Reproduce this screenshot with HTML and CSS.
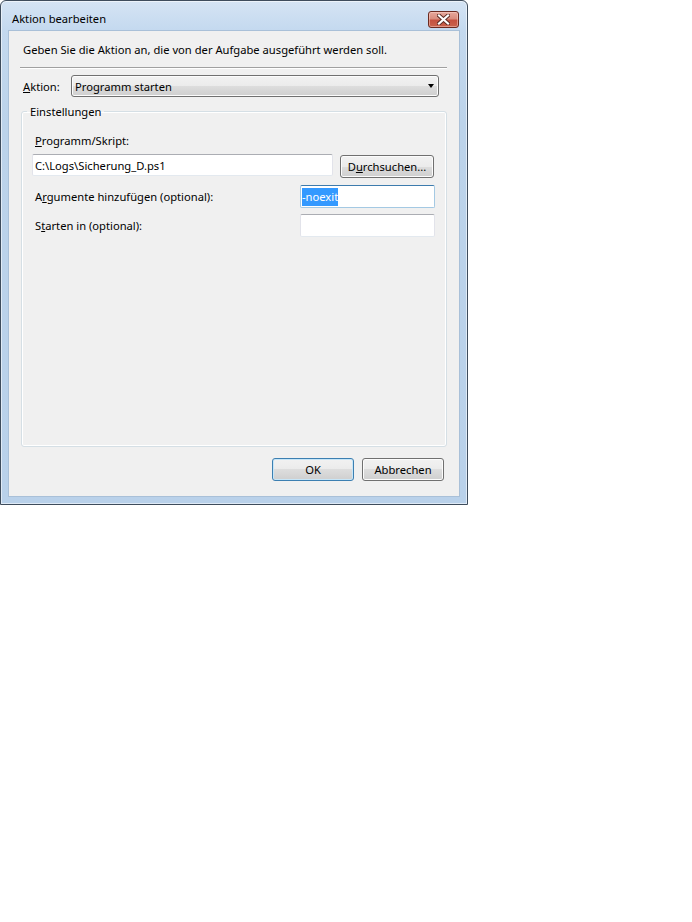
FILE: index.html
```html
<!DOCTYPE html>
<html lang="de">
<head>
<meta charset="utf-8">
<title>Aktion bearbeiten</title>
<link rel="stylesheet" href="styles.css">
</head>
<body>
<div class="window">
  <div class="titlebar">
    <span class="title">Aktion bearbeiten</span>
    <span class="close" aria-label="Schließen">
      <svg width="13" height="11" viewBox="0 0 13 11">
        <path d="M2 1.5 L11 9.5 M11 1.5 L2 9.5" stroke="#5a2a22" stroke-width="4" stroke-linecap="square" fill="none"/>
        <path d="M2 1.5 L11 9.5 M11 1.5 L2 9.5" stroke="#ffffff" stroke-width="2.2" stroke-linecap="square" fill="none"/>
      </svg>
    </span>
  </div>
  <div class="client">
    <p class="intro">Geben Sie die Aktion an, die von der Aufgabe ausgeführt werden soll.</p>
    <div class="sep"></div>
    <div class="action-row">
      <span class="action-label"><u>A</u>ktion:</span>
      <div class="combo"><span class="combo-text">Programm starten</span><span class="arrow"></span></div>
    </div>
    <fieldset class="group">
      <legend class="group-title">Einstellungen</legend>
      <div class="field-label"><u>P</u>rogramm/Skript:</div>
      <div class="program-row">
        <div class="textbox wide">C:\Logs\Sicherung_D.ps1</div>
        <div class="btn browse">D<u>u</u>rchsuchen...</div>
      </div>
      <div class="opt-row first">
        <span class="opt-label">A<u>r</u>gumente hinzufügen (optional):</span>
        <div class="textbox small focused"><span class="sel">-noexit</span></div>
      </div>
      <div class="opt-row">
        <span class="opt-label">S<u>t</u>arten in (optional):</span>
        <div class="textbox small"></div>
      </div>
    </fieldset>
    <div class="buttons">
      <div class="btn default">OK</div>
      <div class="btn">Abbrechen</div>
    </div>
  </div>
</div>
</body>
</html>
```

FILE: styles.css
```css
* { box-sizing: border-box; }

body {
  margin: 0;
  background: #ffffff;
  font-family: "Noto Sans", "Liberation Sans", sans-serif;
  font-size: 11.2px;
  color: #000000;
}

u { text-decoration: underline; text-underline-offset: 1px; }

.window {
  width: 468px;
  height: 505px;
  border: 1px solid #3e4c5c;
  border-radius: 6px 6px 0 0;
  background: linear-gradient(to bottom, #d5e4f4 0px, #c4d9ef 29px, #bcd3ea 120px, #b9d1ea 100%);
  box-shadow: inset 0 0 0 1px rgba(255, 255, 255, 0.55);
  padding: 0 7px 7px 7px;
  display: flex;
  flex-direction: column;
}

.titlebar {
  height: 29px;
  display: flex;
  align-items: flex-start;
  justify-content: space-between;
}

.title {
  margin: 10px 0 0 4px;
  line-height: 15px;
  color: #000;
}

.close {
  margin: 10px 1px 0 0;
  width: 31px;
  height: 17px;
  border: 1px solid #6b2a20;
  border-radius: 3px;
  background: linear-gradient(to bottom, #e7a89c 0%, #d98d7e 45%, #c5513f 55%, #c9634d 100%);
  box-shadow: inset 0 0 0 1px rgba(255, 220, 210, 0.45);
  display: flex;
  align-items: center;
  justify-content: center;
}

.client {
  flex: 1;
  background: #f0f0f0;
  border: 1px solid #a9c0d8;
  display: flex;
  flex-direction: column;
}

.intro {
  margin: 11px 0 0 14px;
  line-height: 15px;
}

.sep {
  margin: 10px 12px 0 11px;
  height: 2px;
  border-top: 1px solid #a0a0a0;
  border-bottom: 1px solid #ffffff;
}

.action-row {
  margin: 6px 0 0 14px;
  display: flex;
  align-items: center;
}

.action-label {
  width: 48px;
  line-height: 15px;
}

.combo {
  width: 368px;
  height: 22px;
  border: 1px solid #707070;
  border-radius: 3px;
  background: linear-gradient(to bottom, #f2f2f2 0%, #ebebeb 50%, #dddddd 50%, #cfcfcf 100%);
  box-shadow: inset 0 0 0 1px #fcfcfc;
  display: flex;
  align-items: center;
  padding: 0 4px 0 3px;
}

.combo-text { flex: 1; line-height: 15px; }

.arrow {
  width: 0;
  height: 0;
  border-left: 3.5px solid transparent;
  border-right: 3.5px solid transparent;
  border-top: 4px solid #000;
}

.group {
  margin: 7px 12px 0 12px;
  padding: 0;
  min-width: 0;
  flex: 1;
  border: 1px solid #d5dfe5;
  border-radius: 3px;
  box-shadow: inset 0 0 0 1px #ffffff;
}

.group-title {
  margin-left: 5px;
  padding: 0 3px;
  line-height: 15px;
}

.field-label {
  margin: 14px 0 0 13px;
  line-height: 15px;
}

.program-row {
  margin: 6px 0 0 10px;
  display: flex;
  align-items: flex-start;
}

.textbox {
  height: 22px;
  background: #ffffff;
  border: 1px solid #dbdfe6;
  border-top-color: #abadb3;
  border-left-color: #e2e3ea;
  border-right-color: #e2e3ea;
  border-bottom-color: #e3e9ef;
  border-radius: 2px;
  display: flex;
  align-items: center;
  line-height: 15px;
}

.textbox.wide {
  width: 301px;
  padding-left: 2px;
}

.textbox.small {
  width: 135px;
  height: 23px;
  padding-left: 1px;
}

.textbox.focused {
  border-color: #a4c9e3;
  border-top-color: #3d7bad;
}

.sel {
  background: #3399ff;
  color: #ffffff;
  line-height: 18px;
}

.btn {
  height: 23px;
  border: 1px solid #707070;
  border-radius: 3px;
  background: linear-gradient(to bottom, #f2f2f2 0%, #ebebeb 50%, #dddddd 50%, #cfcfcf 100%);
  box-shadow: inset 0 0 0 1px #fcfcfc;
  display: flex;
  align-items: center;
  justify-content: center;
  line-height: 15px;
}

.btn.browse {
  width: 94px;
  margin: 1px 0 0 7px;
}

.opt-row {
  display: flex;
  align-items: center;
  justify-content: space-between;
  width: 403px;
  margin: 6px 0 0 10px;
}

.opt-row.first { margin-top: 7px; }

.opt-label { margin-left: 3px; }

.buttons {
  margin: 11px 15px 15px 0;
  display: flex;
  justify-content: flex-end;
  gap: 8px;
}

.buttons .btn { width: 82px; }

.btn.default {
  border-color: #3c7fb1;
  box-shadow: inset 0 0 0 1px #c7e6f8;
}
```
